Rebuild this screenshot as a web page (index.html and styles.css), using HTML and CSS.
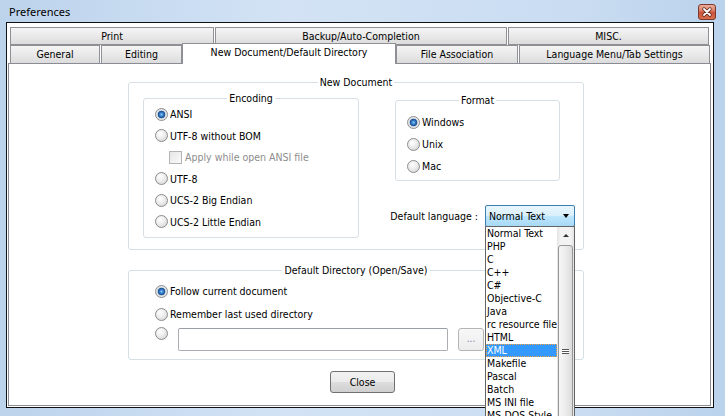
FILE: index.html
```html
<!DOCTYPE html>
<html>
<head>
<meta charset="utf-8">
<title>Preferences</title>
<link rel="stylesheet" href="styles.css">
</head>
<body>
<div class="window">
  <div class="titlebar">
    <span class="title">Preferences</span>
    <span class="close-btn">
      <svg width="18" height="16" viewBox="0 0 18 16">
        <defs>
          <linearGradient id="cg" x1="0" y1="0" x2="0" y2="1">
            <stop offset="0" stop-color="#eeb1a0"/>
            <stop offset="0.45" stop-color="#d77a62"/>
            <stop offset="0.5" stop-color="#c9533a"/>
            <stop offset="1" stop-color="#d9714f"/>
          </linearGradient>
        </defs>
        <rect x="0.5" y="0.5" width="17" height="15" rx="2.5" fill="url(#cg)" stroke="#7d3a2c"/>
        <path d="M6 5 L12 11 M12 5 L6 11" stroke="#5a2418" stroke-width="3.2" stroke-linecap="round"/>
        <path d="M6 5 L12 11 M12 5 L6 11" stroke="#ffffff" stroke-width="1.8" stroke-linecap="round"/>
      </svg>
    </span>
  </div>
  <div class="client">
    <div class="tabs">
      <div class="tab-row">
        <div class="tab t-print">Print</div>
        <div class="tab t-backup">Backup/Auto-Completion</div>
        <div class="tab t-misc">MISC.</div>
      </div>
      <div class="tab-row front">
        <div class="tab t-general">General</div>
        <div class="tab t-editing">Editing</div>
        <div class="tab t-newdoc active">New Document/Default Directory</div>
        <div class="tab t-file">File Association</div>
        <div class="tab t-lang">Language Menu/Tab Settings</div>
      </div>
    </div>
    <div class="pane">
      <div class="group newdoc">
        <div class="group-title"><span>New Document</span></div>
        <div class="nd-body">
          <div class="group encoding">
            <div class="group-title"><span>Encoding</span></div>
            <div class="enc-list">
              <div class="opt"><span class="radio on"></span><span>ANSI</span></div>
              <div class="opt"><span class="radio"></span><span>UTF-8 without BOM</span></div>
              <div class="opt sub"><span class="check"></span><span class="disabled">Apply while open ANSI file</span></div>
              <div class="opt"><span class="radio"></span><span>UTF-8</span></div>
              <div class="opt"><span class="radio"></span><span>UCS-2 Big Endian</span></div>
              <div class="opt"><span class="radio"></span><span>UCS-2 Little Endian</span></div>
            </div>
          </div>
          <div class="nd-right">
            <div class="group format">
              <div class="group-title"><span>Format</span></div>
              <div class="fmt-list">
                <div class="opt"><span class="radio on"></span><span>Windows</span></div>
                <div class="opt"><span class="radio"></span><span>Unix</span></div>
                <div class="opt"><span class="radio"></span><span>Mac</span></div>
              </div>
            </div>
            <div class="lang-row">
              <span class="lang-label">Default language :</span>
              <div class="combo">
                <span class="combo-text">Normal Text</span>
                <span class="combo-arrow"></span>
                <div class="droplist">
                  <div class="items">
                    <div class="item">Normal Text</div>
                    <div class="item">PHP</div>
                    <div class="item">C</div>
                    <div class="item">C++</div>
                    <div class="item">C#</div>
                    <div class="item">Objective-C</div>
                    <div class="item">Java</div>
                    <div class="item">rc resource file</div>
                    <div class="item">HTML</div>
                    <div class="item sel">XML</div>
                    <div class="item">Makefile</div>
                    <div class="item">Pascal</div>
                    <div class="item">Batch</div>
                    <div class="item">MS INI file</div>
                    <div class="item">MS-DOS Style</div>
                  </div>
                  <div class="vscroll">
                    <div class="sb-up"><span class="sb-arrow"></span></div>
                    <div class="sb-thumb"><span class="grip"></span></div>
                  </div>
                </div>
              </div>
            </div>
          </div>
        </div>
      </div>

      <div class="group defdir">
        <div class="group-title"><span>Default Directory (Open/Save)</span></div>
        <div class="opt dd1"><span class="radio on"></span><span>Follow current document</span></div>
        <div class="opt dd2"><span class="radio"></span><span>Remember last used directory</span></div>
        <div class="dd3">
          <span class="radio"></span>
          <span class="textbox"></span>
          <span class="browse">...</span>
        </div>
      </div>

      <div class="close-row"><span class="button">Close</span></div>
    </div>
  </div>
</div>
</body>
</html>
```

FILE: styles.css
```css
* { box-sizing: border-box; }
html, body { margin: 0; padding: 0; }
body {
  width: 725px;
  height: 416px;
  overflow: hidden;
  background: #c6daef;
  font-family: "DejaVu Sans Condensed", "DejaVu Sans", sans-serif;
  font-stretch: semi-condensed;
  font-size: 10.5px;
  color: #000;
}
.window {
  width: 725px;
  height: 416px;
  padding-left: 6px;
  background: linear-gradient(90deg, #bcd3ec 0, #d3e3f5 40%, #c9dcf1 80%, #bad2ec 100%);
}
.titlebar {
  height: 22px;
  display: flex;
  align-items: center;
  padding-left: 3px;
  padding-right: 9px;
}
.title {
  font-family: "Noto Sans", "Open Sans", sans-serif;
  font-stretch: normal;
  font-size: 11px;
  color: #000;
}
.close-btn {
  margin-left: auto;
  width: 18px;
  height: 16px;
  margin-top: 2px;
  display: flex;
}
.client {
  width: 708px;
  height: 386px;
  border: 1px solid #111;
  background: #fff;
}
.tabs { padding: 4px 0 0 3px; }
.tab-row { display: flex; align-items: flex-start; height: 18px; }
.tab {
  height: 18px;
  border: 1px solid #8e9096;
  background: linear-gradient(#f4f4f4, #e9e9e9 50%, #dcdcdc);
  text-align: center;
  line-height: 16px;
  white-space: nowrap;
}
.front .tab { border-bottom: none; }
.t-print { width: 204px; margin-right: 1px; }
.t-backup { width: 292px; margin-right: 1px; }
.t-misc { width: 201px; }
.t-general { width: 90px; margin-right: 1px; }
.t-editing { width: 81px; }
.t-newdoc { width: 214px; }
.t-file { width: 122px; margin-right: 1px; }
.t-lang { width: 191px; }
.tab.active {
  position: relative;
  z-index: 2;
  height: 21px;
  margin-top: -2px;
  background: #fff;
}
.pane {
  margin-left: 1px;
  width: 703px;
  height: 343px;
  border: 1px solid #898c95;
  background: #fff;
}

/* group boxes */
.group {
  border: 1px solid #d5dfe5;
  border-radius: 3px;
}
.group-title {
  display: flex;
  justify-content: center;
  height: 13px;
  line-height: 13px;
  margin-top: -7px;
}
.group-title span { background: #fff; padding: 0 2px; }

.newdoc {
  margin: 18px 0 0 119px;
  width: 456px;
  height: 168px;
}
.nd-body { display: flex; align-items: flex-start; }
.encoding {
  margin: 9px 0 0 14px;
  width: 216px;
  height: 140px;
}
.enc-list { margin-top: -1.5px; }
.opt {
  display: flex;
  align-items: center;
  white-space: nowrap;
}
.enc-list .opt { height: 21.5px; padding-left: 11px; }
.enc-list .opt.sub { padding-left: 25px; }
.radio {
  flex: none;
  width: 13px;
  height: 13px;
  border-radius: 50%;
  border: 1px solid #8a8c8f;
  background: radial-gradient(circle at 40% 35%, #ffffff 0, #ececec 45%, #cdcdcd 100%);
  margin-right: 2px;
}
.radio.on {
  background: radial-gradient(circle at 50% 50%, #8ccbf8 0, #3a86d4 1.6px, #1a4f8e 3.4px, #cfd6dd 4.1px, #eeeeee 5.5px);
}
.check {
  flex: none;
  width: 13px;
  height: 13px;
  border: 1px solid #b4b4b4;
  background: linear-gradient(135deg, #e6e6e6, #fafafa);
  margin-right: 3px;
}
.disabled { color: #8d8d8d; }

.nd-right {
  margin: 11px 0 0 29px;
  width: 187px;
}
.format {
  margin-left: 7px;
  width: 165px;
  height: 81px;
}
.fmt-list { padding-top: 4px; }
.fmt-list .opt { height: 22px; padding-left: 11px; }

.lang-row {
  margin-top: 24px;
  height: 22px;
  display: flex;
  justify-content: flex-end;
  align-items: center;
}
.lang-label { margin-right: 7px; white-space: nowrap; }
.combo {
  position: relative;
  width: 90px;
  height: 22px;
  border: 1px solid #3c7fb1;
  border-radius: 2px;
  background: linear-gradient(#eaf6fd 0, #d9f0fc 48%, #bee6fd 52%, #a7d9f5 100%);
  display: flex;
  align-items: center;
  padding-left: 3px;
}
.combo-text { white-space: nowrap; }
.combo-arrow {
  margin-left: auto;
  margin-right: 5px;
  width: 0;
  height: 0;
  border-left: 3.5px solid transparent;
  border-right: 3.5px solid transparent;
  border-top: 4px solid #000;
}
.droplist {
  position: absolute;
  left: -1px;
  top: 20px;
  width: 90px;
  height: 200px;
  border: 1px solid #646464;
  background: #fff;
  display: flex;
  z-index: 5;
}
.items { width: 71px; }
.item {
  height: 13px;
  line-height: 13px;
  padding-left: 1px;
  white-space: nowrap;
  overflow: hidden;
}
.item.sel {
  background: #3399ff;
  color: #fff;
  outline: 1px dotted #f7a34a;
  outline-offset: -1px;
}
.vscroll {
  width: 17px;
  background: linear-gradient(90deg, #e3e3e3, #f3f3f3 20%, #f3f3f3 80%, #e3e3e3);
  display: flex;
  flex-direction: column;
  align-items: center;
}
.sb-up {
  width: 17px;
  height: 16px;
  display: flex;
  align-items: center;
  justify-content: center;
}
.sb-arrow {
  width: 0;
  height: 0;
  border-left: 3px solid transparent;
  border-right: 3px solid transparent;
  border-bottom: 3px solid #333;
}
.sb-thumb {
  margin-top: 2px;
  width: 15px;
  flex: 1;
  border: 1px solid #979797;
  border-radius: 3px;
  background: linear-gradient(90deg, #f6f6f6, #ececec 50%, #dcdcdc);
  display: flex;
  justify-content: center;
  padding-top: 103px;
}
.grip {
  width: 7px;
  height: 5px;
  border-top: 1px solid #555;
  border-bottom: 1px solid #555;
  background: linear-gradient(#fff 0, #fff 1px, #555 1px, #555 2px, #fff 2px);
}

/* default directory */
.defdir {
  margin: 20px 0 0 119px;
  width: 456px;
  height: 90px;
}
.defdir .opt { padding-left: 26px; height: 22px; }
.dd1 { margin-top: 3px; }
.dd2 { margin-top: 1px; }
.dd3 {
  margin-top: 3px;
  padding-left: 26px;
  display: flex;
  align-items: flex-start;
}
.dd3 .radio { margin-top: -1.5px; }
.textbox {
  margin-left: 8px;
  width: 270px;
  height: 23px;
  border: 1px solid #abadb3;
  border-top-color: #9a9ea6;
  border-radius: 2px;
  background: #fff;
}
.browse {
  margin-left: 10px;
  width: 26px;
  height: 23px;
  border: 1px solid #b5b5b5;
  border-radius: 3px;
  background: linear-gradient(#f7f7f7, #ededed);
  color: #7a7aa6;
  text-align: center;
  line-height: 20px;
  font-size: 10px;
}
.close-row { margin: 11px 0 0 321px; }
.button {
  display: flex;
  align-items: center;
  justify-content: center;
  width: 65px;
  height: 22px;
  border: 1px solid #707070;
  border-radius: 3px;
  background: linear-gradient(#f2f2f2 0, #ebebeb 48%, #dddddd 52%, #cfcfcf 100%);
}
```
